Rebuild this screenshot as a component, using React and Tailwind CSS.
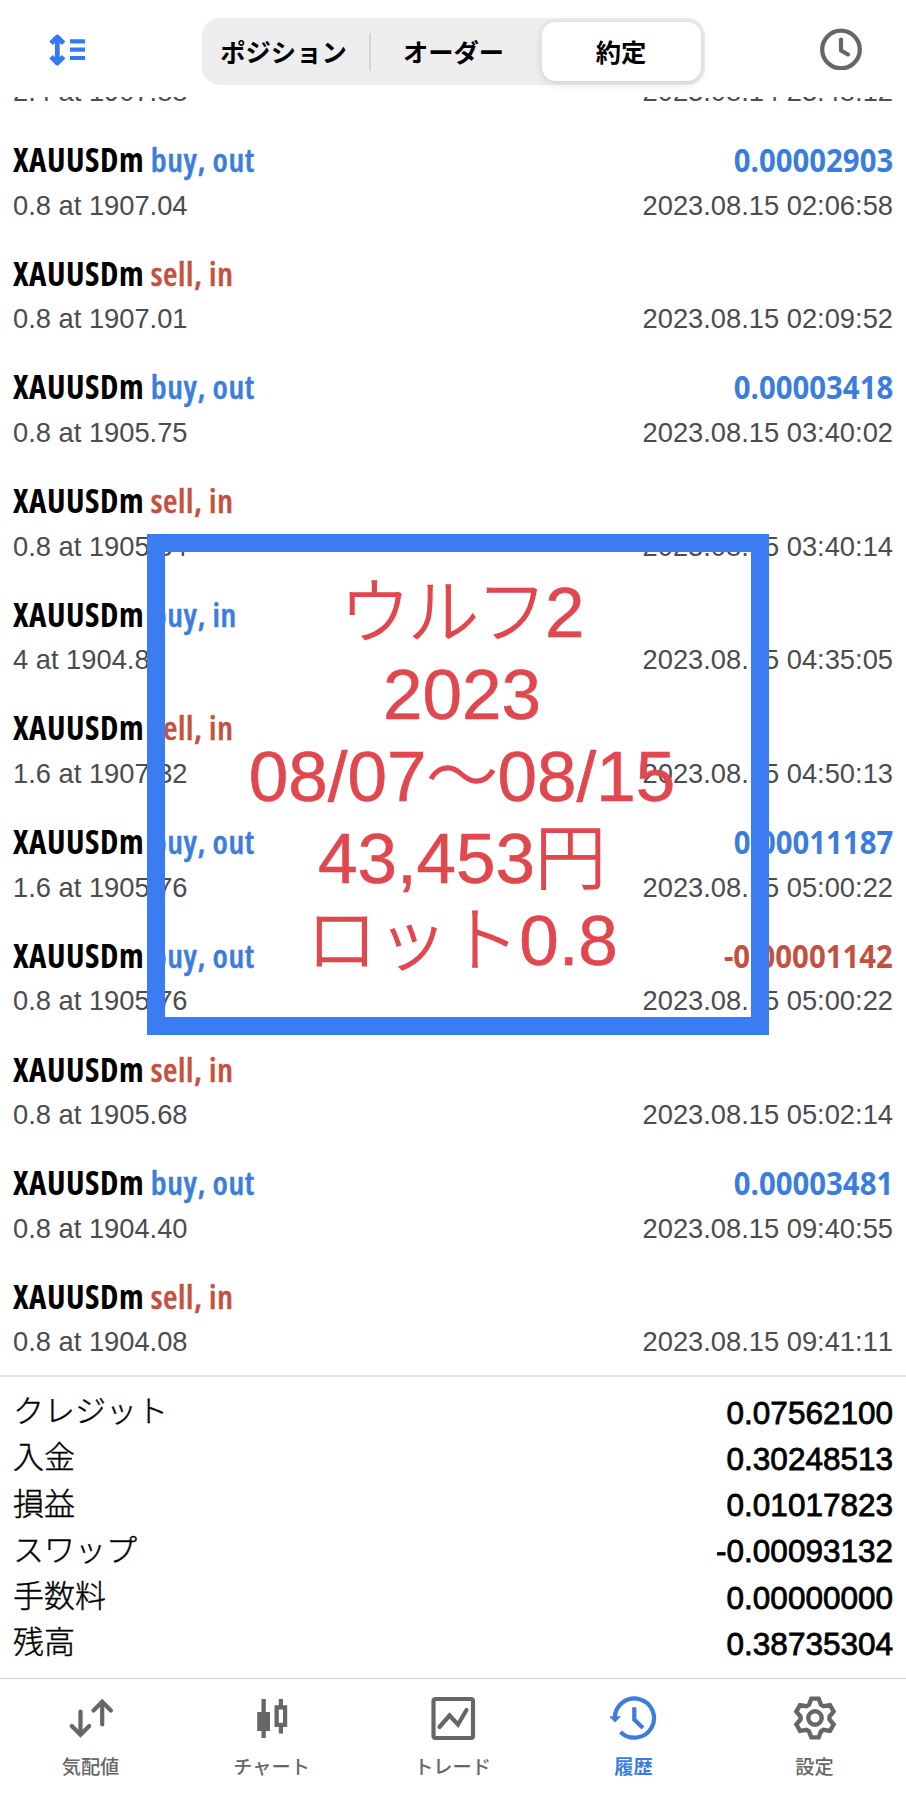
const deals = [
  { side: "buy", entry: "out", lots: "0.8 at 1907.04", time: "2023.08.15 02:06:58", profit: "0.00002903" },
  { side: "sell", entry: "in", lots: "0.8 at 1907.01", time: "2023.08.15 02:09:52" },
  { side: "buy", entry: "out", lots: "0.8 at 1905.75", time: "2023.08.15 03:40:02", profit: "0.00003418" },
  { side: "sell", entry: "in", lots: "0.8 at 1905.34", time: "2023.08.15 03:40:14" },
  { side: "buy", entry: "in", lots: "4 at 1904.88", time: "2023.08.15 04:35:05" },
  { side: "sell", entry: "in", lots: "1.6 at 1907.32", time: "2023.08.15 04:50:13" },
  { side: "buy", entry: "out", lots: "1.6 at 1905.76", time: "2023.08.15 05:00:22", profit: "0.00011187" },
  { side: "buy", entry: "out", lots: "0.8 at 1905.76", time: "2023.08.15 05:00:22", profit: "-0.00001142" },
  { side: "sell", entry: "in", lots: "0.8 at 1905.68", time: "2023.08.15 05:02:14" },
  { side: "buy", entry: "out", lots: "0.8 at 1904.40", time: "2023.08.15 09:40:55", profit: "0.00003481" },
  { side: "sell", entry: "in", lots: "0.8 at 1904.08", time: "2023.08.15 09:41:11" },
];

const totals = [
  ["クレジット", "0.07562100"],
  ["入金", "0.30248513"],
  ["損益", "0.01017823"],
  ["スワップ", "-0.00093132"],
  ["手数料", "0.00000000"],
  ["残高", "0.38735304"],
];

function SortIcon() {
  return (
    <svg className="h-8 w-9" viewBox="0 0 36 32" fill="none" stroke="#3478f6">
      <path
        d="M8.3 3v26M2 9.300l6.300-6.300 6.300 6.300M2 22.700l6.300 6.300 6.300-6.300"
        strokeWidth="4.800"
        strokeLinejoin="round"
      />
      <path d="M21 7.300h15M21 15.700h15M21 24h15" strokeWidth="4.200" />
    </svg>
  );
}

function ClockIcon() {
  return (
    <svg className="size-[42px]" viewBox="0 0 42 42" fill="none" stroke="#666">
      <circle cx="21" cy="21.500" r="18.800" strokeWidth="4.300" />
      <path d="M21 11.500v11l7 4" strokeWidth="4.200" strokeLinecap="round" strokeLinejoin="round" />
    </svg>
  );
}

function QuotesIcon() {
  return (
    <svg className="size-12" viewBox="0 0 48 48" fill="none" stroke="currentColor" strokeWidth="4.200">
      <path d="M13.5 17.500v23M35.200 30.500V8" strokeLinecap="round" />
      <path d="M4.800 32l8.700 8.700 8.700-8.700M26.500 16.500l8.700-8.700 8.700 8.700" strokeLinecap="round" />
    </svg>
  );
}

function ChartIcon() {
  return (
    <svg className="size-12" viewBox="0 0 48 48" fill="currentColor">
      <path d="M13.500 5h4.300v13H22v19h-4.200v7h-4.300v-7H9.200V18h4.300z" />
      <path
        fillRule="evenodd"
        d="M30.800 5h4.200v6.300h4.200V33H35v6.500h-4.200V33h-4.300V11.300h4.300zM30.800 15.500v13.300H35V15.500z"
      />
    </svg>
  );
}

function TradeIcon() {
  return (
    <svg className="size-12" viewBox="0 0 48 48" fill="none" stroke="currentColor" strokeWidth="4.200">
      <rect x="4.500" y="5" width="39.500" height="39" rx="2" />
      <path d="M10.500 33l10-11.500 8.500 9L37.500 16" strokeLinecap="round" />
    </svg>
  );
}

function HistoryIcon() {
  return (
    <svg className="size-12" viewBox="0 0 48 48" fill="none" stroke="currentColor" strokeWidth="4.200">
      <path d="M4.800 24a19.600 19.600 0 1 1 5.700 13.900" />
      <path d="M-1 22.300h12L5 28.500z" fill="currentColor" stroke="none" />
      <path d="M24.300 13.300v12.300l8.700 8.300" />
    </svg>
  );
}

function SettingsIcon() {
  return (
    <svg className="size-12" viewBox="-24 -24 48 48" fill="none" stroke="currentColor" strokeWidth="4.400">
      <path d="M6-13.300L3.700-19.400L-3.700-19.400L-6-13.300L-8.500-11.800L-14.950-12.900L-18.650-6.500L-14.500-1.450L-14.500 1.450L-18.650 6.500L-14.950 12.900L-8.500 11.800L-6 13.300L-3.700 19.400L3.700 19.400L6 13.300L8.500 11.800L14.950 12.900L18.650 6.500L14.500 1.450L14.500-1.450L18.650-6.500L14.950-12.900L8.500-11.800z" />
      <circle cx="0" cy="0" r="6.700" />
    </svg>
  );
}

const tabs = [
  { label: "気配値", Icon: QuotesIcon },
  { label: "チャート", Icon: ChartIcon },
  { label: "トレード", Icon: TradeIcon },
  { label: "履歴", Icon: HistoryIcon, active: true },
  { label: "設定", Icon: SettingsIcon },
];

function DealRow({ deal }) {
  const loss = deal.profit?.startsWith("-");

  return (
    <li className="h-[113.7px] shrink-0 px-[13px]">
      <div className="flex h-[44px] items-center justify-between font-['Open_Sans'] text-[33px] font-semibold leading-[44px]">
        <span className="tracking-[0.6px] [font-stretch:75%]">
          <span className="font-bold tracking-[0.5px]">XAUUSDm</span>{" "}
          <span
            className={
              deal.side === "buy"
                ? "text-[#3b7ddd] [-webkit-text-stroke:0.5px_#3b7ddd]"
                : "text-[#c4513f] [-webkit-text-stroke:0.5px_#c4513f]"
            }
          >
            {deal.side}, {deal.entry}
          </span>
        </span>
        <span
          className={
            loss
              ? "inline-block origin-right scale-x-[0.89] font-bold text-[#c4513f]"
              : "inline-block origin-right scale-x-[0.89] font-bold text-[#3b7ddd]"
          }
        >
          {deal.profit}
        </span>
      </div>
      <div className="flex h-[48px] items-center justify-between text-[27.3px] text-[#4b4b50]">
        <span>{deal.lots}</span>
        <span>{deal.time}</span>
      </div>
    </li>
  );
}

export default function App() {
  return (
    <div className="relative flex h-[1811px] w-[906px] flex-col overflow-hidden bg-white font-['Liberation_Sans','Noto_Sans_CJK_JP',sans-serif] text-black [font-kerning:none]">
      <header className="flex h-[97px] shrink-0 items-start justify-between pl-[49px] pr-[44px]">
        <div className="pt-[34px]">
          <SortIcon />
        </div>
        <div className="mt-[18px] ml-px flex h-[67px] w-[503px] items-center rounded-[18px] bg-[#eee] p-1 text-[25.3px] font-bold">
          <button className="h-full w-[163px] pt-[4px] pr-[7px]">ポジション</button>
          <span className="h-[38px] w-[2px] bg-[#d4d4d8]" />
          <button className="h-full flex-1 pt-[4px] pr-[5px]">オーダー</button>
          <button className="h-full w-[159px] rounded-[14px] bg-white pt-[4px] shadow-[0_2px_10px_rgba(0,0,0,0.14)]">
            約定
          </button>
        </div>
        <div className="pt-[28px]">
          <ClockIcon />
        </div>
      </header>

      <main className="h-[1278px] shrink-0 overflow-hidden">
        <div className="-mt-[26px] flex h-[67px] items-start justify-between px-[13px] text-[27.3px] leading-[42px] text-[#4b4b50]">
          <span>2.4 at 1907.88</span>
          <span>2023.08.14 23:48:12</span>
        </div>
        <ul className="flex flex-col">
          {deals.map((deal, index) => (
            <DealRow key={index} deal={deal} />
          ))}
        </ul>
      </main>

      <section className="flex h-[303px] shrink-0 flex-col border-t-2 border-[#e2e2e4] px-[13px] pt-[13px]">
        {totals.map(([label, value]) => (
          <div key={label} className="flex h-[46.3px] items-center justify-between">
            <span className="pb-[2px] text-[31px] font-light [-webkit-text-stroke:0.4px_black]">{label}</span>
            <span className="text-[31.5px] [-webkit-text-stroke:0.8px_black]">{value}</span>
          </div>
        ))}
      </section>

      <nav className="grid flex-1 grid-cols-5 border-t border-[#d4d4d6] pt-[15px] pr-px">
        {tabs.map(({ label, Icon, active }) => (
          <button
            key={label}
            className={
              active
                ? "flex flex-col items-center text-[19.2px] font-bold text-[#3b7ddd]"
                : "flex flex-col items-center text-[19.2px] font-medium text-[#666]"
            }
          >
            <Icon />
            <span className="mt-[12px] leading-7">{label}</span>
          </button>
        ))}
      </nav>

      {/* note pinned over the list */}
      <div className="absolute left-[147px] top-[534px] h-[501px] w-[622px] border-[18px] border-[#3b7cf3] pt-[20px] pl-[8px] text-center text-[71px] font-light leading-[82px] text-[#e1474e] [-webkit-text-stroke:0.6px_#e1474e]">
        <p>
          <span className="tracking-[-2.5px] [-webkit-text-stroke:1.4px_#e1474e]">ウルフ</span>2
        </p>
        <p>2023</p>
        <p>
          08/07<span className="[-webkit-text-stroke:1.4px_#e1474e]">〜</span>08/15
        </p>
        <p>
          43,453<span className="[-webkit-text-stroke:1.4px_#e1474e]">円</span>
        </p>
        <p>
          <span className="[-webkit-text-stroke:1.4px_#e1474e]">ロット</span>0.8
        </p>
      </div>
    </div>
  );
}
